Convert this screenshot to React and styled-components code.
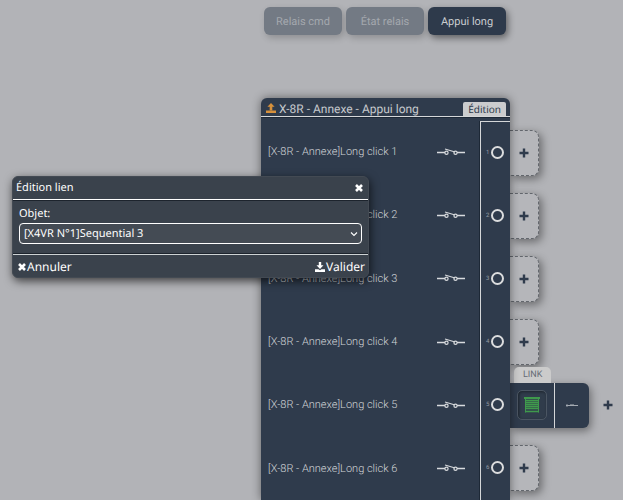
import { useState } from "react";
import styled, { createGlobalStyle } from "styled-components";

const tabs = ["Relais cmd", "État relais", "Appui long"];
const objects = ["[X4VR N°1]Sequential 1", "[X4VR N°1]Sequential 2", "[X4VR N°1]Sequential 3"];
const inputs = [
  { id: 1 },
  { id: 2 },
  { id: 3 },
  { id: 4 },
  { id: 5, linked: true },
  { id: 6 },
];

function SwitchIcon() {
  return (
    <svg width="30" height="12" viewBox="0 0 30 12" fill="none" stroke="#d8dadd" aria-hidden="true">
      <path d="M1 6.500H9M21 6.500H29" strokeWidth="1.3" />
      <path d="M9 3L19 6" strokeWidth="1.200" />
      <circle cx="10.500" cy="6.800" r="1.600" strokeWidth="1.200" />
      <circle cx="19.500" cy="6.800" r="1.600" strokeWidth="1.200" />
    </svg>
  );
}

function ShutterIcon() {
  return (
    <svg width="18" height="18" viewBox="0 0 18 18" fill="none" stroke="#3f9a4c" aria-hidden="true">
      <path d="M1 2H17" strokeWidth="2" />
      <path d="M2.500 2V16.500M15.500 2V16.500" />
      <path d="M3 4.500H15M3 6.500H15M3 8.500H15M3 10.500H15M3 12.500H15M2 15.500H16" strokeWidth="1.300" />
    </svg>
  );
}

function TinySwitchIcon() {
  return (
    <svg width="12" height="4" viewBox="0 0 12 4" fill="none" stroke="#a5abb3" aria-hidden="true">
      <path d="M0 2.500H12" strokeWidth="1" />
      <path d="M1 1V4M4 1.800H8" strokeWidth="0.8" />
    </svg>
  );
}

function PlusIcon() {
  return (
    <svg width="10" height="10" viewBox="0 0 10 10" stroke="currentColor" aria-hidden="true">
      <path d="M5 0.500V9.500M0.500 5H9.500" strokeWidth="2.400" />
    </svg>
  );
}

function CloseIcon() {
  return (
    <svg width="8" height="8" viewBox="0 0 8 8" stroke="currentColor" aria-hidden="true">
      <path d="M1 1L7 7M7 1L1 7" strokeWidth="2.600" />
    </svg>
  );
}

function UploadIcon() {
  return (
    <svg width="10" height="10" viewBox="0 0 10 10" fill="currentColor" aria-hidden="true">
      <path d="M5 0L8.600 3.800H6.300V7.500H3.700V3.800H1.400Z" />
      <path d="M0 7.500H10V10H0Z" />
    </svg>
  );
}

function DownloadIcon() {
  return (
    <svg width="10" height="10" viewBox="0 0 10 10" fill="currentColor" aria-hidden="true">
      <path d="M3.800 0H6.200V3.300H8.500L5 7L1.500 3.300H3.800Z" />
      <path d="M0 7.200H3.500L5 8.300L6.500 7.200H10V10H0Z" />
    </svg>
  );
}

function Link() {
  return (
    <LinkWrapper>
      <LinkTag>LINK</LinkTag>
      <LinkCard>
        <LinkObject>
          <ObjectButton aria-label="Sequential 3">
            <ShutterIcon />
          </ObjectButton>
        </LinkObject>
        <LinkAction>
          <TinySwitchIcon />
        </LinkAction>
      </LinkCard>
      <AddButton aria-label="Ajouter">
        <PlusIcon />
      </AddButton>
    </LinkWrapper>
  );
}

function LinkDialog({ onClose }) {
  return (
    <Dialog role="dialog" aria-labelledby="dialog-title">
      <DialogHeader>
        <DialogTitle id="dialog-title">Édition lien</DialogTitle>
        <DialogButton aria-label="Fermer" onClick={onClose}>
          <CloseIcon />
        </DialogButton>
      </DialogHeader>
      <DialogBody>
        <label htmlFor="objet">Objet:</label>
        <SelectBox>
          <Select id="objet" defaultValue={objects[2]}>
            {objects.map((name) => (
              <option key={name}>{name}</option>
            ))}
          </Select>
          <svg width="8" height="6" viewBox="0 0 8 6" fill="none" stroke="#fff" aria-hidden="true">
            <path d="M1 1.500L4 4.500L7 1.500" strokeWidth="1.100" />
          </svg>
        </SelectBox>
      </DialogBody>
      <DialogFooter>
        <DialogButton onClick={onClose}>
          <CloseIcon />
          Annuler
        </DialogButton>
        <DialogButton onClick={onClose}>
          <DownloadIcon />
          Valider
        </DialogButton>
      </DialogFooter>
    </Dialog>
  );
}

function App() {
  const [tab, setTab] = useState("Appui long");
  const [open, setOpen] = useState(true);

  return (
    <Page>
      <GlobalStyle />
      <Tabs>
        {tabs.map((name) => (
          <Tab key={name} $active={name === tab} onClick={() => setTab(name)}>
            {name}
          </Tab>
        ))}
      </Tabs>
      <Board>
        <Panel>
          <PanelHeader>
            <UploadIcon />
            <PanelTitle>X-8R - Annexe - Appui long</PanelTitle>
            <EditButton onClick={() => setOpen(true)}>Édition</EditButton>
          </PanelHeader>
          <PanelBody>
            <Rows>
              {inputs.map(({ id }) => (
                <Row key={id}>
                  <span>[X-8R - Annexe]Long click {id}</span>
                  <SwitchIcon />
                </Row>
              ))}
            </Rows>
            <Ports>
              {inputs.map(({ id }) => (
                <Port key={id}>
                  <PortNumber>{id}</PortNumber>
                  <PortRing />
                </Port>
              ))}
            </Ports>
          </PanelBody>
        </Panel>
        <Slots>
          {inputs.map(({ id, linked }) => (
            <Slot key={id}>
              {linked ? (
                <Link />
              ) : (
                <EmptySlot aria-label="Ajouter un lien" onClick={() => setOpen(true)}>
                  <PlusIcon />
                </EmptySlot>
              )}
            </Slot>
          ))}
        </Slots>
      </Board>
      {open && <LinkDialog onClose={() => setOpen(false)} />}
    </Page>
  );
}

const GlobalStyle = createGlobalStyle`
  * {
    box-sizing: border-box;
  }
  body {
    margin: 0;
    background: #b2b3b7;
    font-family: Roboto, "Liberation Sans", sans-serif;
    font-size: 11px;
    text-rendering: geometricPrecision;
  }
  button, select {
    font: inherit;
    color: inherit;
    text-rendering: inherit;
    padding: 0;
    border: 0;
    background: none;
    cursor: pointer;
  }
`;

const Page = styled.main`
  position: relative;
  height: 100vh;
  display: flex;
  flex-direction: column;
  overflow: hidden;
`;

const Tabs = styled.nav`
  display: flex;
  gap: 4px;
  padding: 7px 0 63px 264px;
`;

const Tab = styled.button`
  width: 78px;
  height: 28px;
  border-radius: 6px;
  background: ${(props) => (props.$active ? "#2e3a4b" : "#737a84")};
  color: ${(props) => (props.$active ? "#c9cccf" : "#a4a8ae")};
  box-shadow: 2px 3px 7px ${(props) => (props.$active ? "#0007" : "#0003")};
`;

const Board = styled.div`
  flex: 1;
  min-height: 0;
  display: grid;
  grid-template-columns: 249px 1fr;
  padding-left: 261px;
`;

const Panel = styled.section`
  z-index: 1;
  display: flex;
  flex-direction: column;
  background: #2f3b4c;
  border-radius: 6px 6px 0 0;
  box-shadow: 0 0 10px #0007;
  color: #c6c9cd;
`;

const PanelHeader = styled.header`
  display: flex;
  align-items: flex-end;
  gap: 3px;
  height: 19px;
  padding: 0 4px 0 5px;
  border-bottom: 1px solid #d5d7d9;
  box-shadow: 0 1px 0 #1d2836;
  svg {
    margin-bottom: 3px;
    color: #d7913c;
  }
`;

const PanelTitle = styled.h1`
  flex: 1;
  margin: 0;
  font-size: 12px;
  line-height: 14px;
  font-weight: 400;
`;

const EditButton = styled.button`
  height: 14px;
  padding: 0 5px;
  border-radius: 2px 2px 0 0;
  background: #cbccce;
  color: #2f3b4c;
  font-family: "Noto Sans", sans-serif;
  font-size: 10px;
  line-height: 14px;
`;

const PanelBody = styled.div`
  flex: 1;
  display: grid;
  grid-template-columns: 1fr 30px;
  padding-top: 3px;
`;

const Rows = styled.div`
  display: grid;
  grid-auto-rows: 1fr;
`;

const Row = styled.div`
  display: flex;
  align-items: center;
  justify-content: space-between;
  padding: 0 14px 0 7px;
  font-weight: 300;
  color: #d0d3d6;
`;

const Ports = styled(Rows)`
  margin-top: 1px;
  border-top: 1px solid #d5d7d9;
  border-left: 1px solid #d5d7d9;
  box-shadow: -1px 0 0 #1d2836;
`;

const Port = styled.div`
  display: flex;
  align-items: center;
  justify-content: space-between;
  padding: 0 6px 2px 5px;
`;

const PortNumber = styled.span`
  font-size: 6px;
  color: #9299a2;
`;

const PortRing = styled.span`
  width: 13px;
  height: 13px;
  border: 2px solid #dcddde;
  border-radius: 50%;
`;

const Slots = styled(Rows)`
  padding-top: 23px;
`;

const Slot = styled.div`
  display: flex;
  align-items: center;
`;

const EmptySlot = styled.button`
  display: grid;
  place-items: center;
  width: 29px;
  height: 46px;
  border: 1px dashed #62666c;
  border-left: 0;
  border-radius: 0 7px 7px 0;
  box-shadow: 3px 3px 8px #0006;
  background: #b5b6ba;
  color: #2f3b4c;
`;

const LinkWrapper = styled.div`
  position: relative;
  display: flex;
  align-items: center;
  gap: 14px;
`;

const LinkTag = styled.span`
  position: absolute;
  left: 4px;
  bottom: 100%;
  padding: 0 9px;
  border-radius: 5px 5px 0 0;
  background: #cbcbcb;
  color: #666c75;
  font-size: 9px;
  line-height: 16px;
`;

const LinkCard = styled.div`
  display: flex;
  height: 45px;
  border-radius: 0 6px 6px 0;
  background: #2f3b4c;
  box-shadow: 2px 3px 8px #0006;
`;

const LinkObject = styled.div`
  display: grid;
  place-items: center;
  width: 45px;
  border-right: 1px solid #d5d7d9;
`;

const ObjectButton = styled.button`
  display: grid;
  place-items: center;
  width: 30px;
  height: 30px;
  border: 1px solid #4b5663;
  border-radius: 5px;
  background: #303c4b;
  box-shadow: inset 1px 1px 3px #0006;
`;

const LinkAction = styled.div`
  display: grid;
  place-items: center;
  width: 34px;
`;

const AddButton = styled.button`
  display: flex;
  color: #2f3b4c;
`;

const Dialog = styled.div`
  position: absolute;
  z-index: 2;
  top: 176px;
  left: 12px;
  width: 357px;
  border: 1px solid #434a53;
  border-radius: 6px;
  background: #3a424c;
  box-shadow: 1px 3px 10px #000a;
  color: #fff;
  font-family: "Noto Sans", sans-serif;
  line-height: 18px;
`;

const DialogHeader = styled.header`
  display: flex;
  align-items: center;
  justify-content: space-between;
  padding: 2px 5px 2px 3px;
  border-bottom: 1px solid #fff;
  box-shadow: 0 1px 0 #1d242d;
`;

const DialogTitle = styled.h2`
  margin: 0;
  font-size: 11px;
  font-weight: 400;
`;

const DialogBody = styled.div`
  padding: 5px 6px 10px;
  label {
    display: block;
  }
`;

const SelectBox = styled.div`
  display: grid;
  align-items: center;
  > * {
    grid-area: 1 / 1;
  }
  svg {
    justify-self: end;
    margin-right: 4px;
    pointer-events: none;
  }
`;

const Select = styled.select`
  appearance: none;
  width: 100%;
  height: 21px;
  padding: 0 4px;
  border: 1px solid #fff;
  border-radius: 4px;
  background: #444b54;
  line-height: 18px;
  option {
    background: #3a424c;
  }
`;

const DialogFooter = styled.footer`
  display: flex;
  justify-content: space-between;
  padding: 3px 3px 1px 5px;
  border-top: 1px solid #cdd2d4;
  box-shadow: 0 -1px 0 #1d242d;
  font-size: 12px;
`;

const DialogButton = styled.button`
  display: flex;
  align-items: center;
  gap: 1px;
`;

export default App;
